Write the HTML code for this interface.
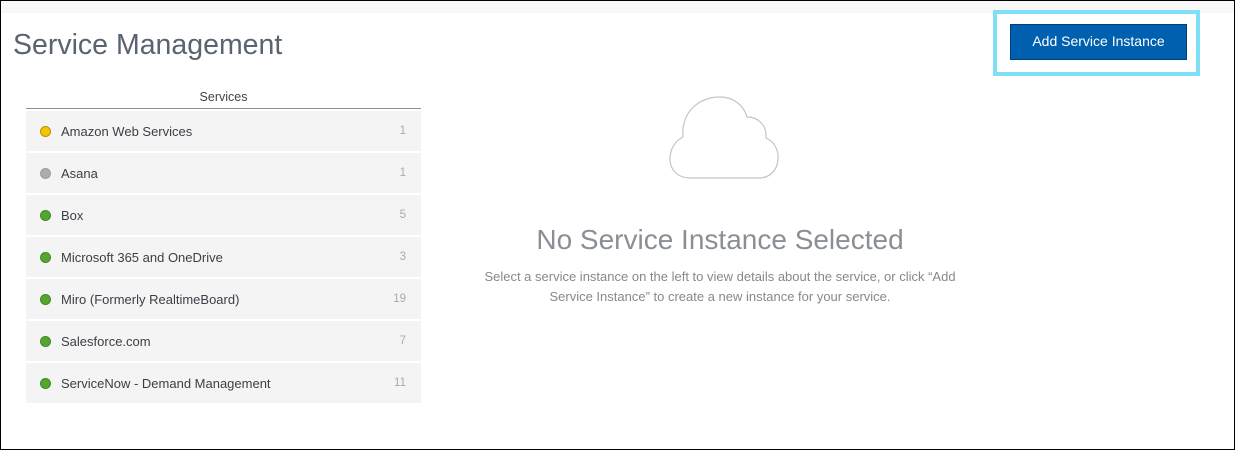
<!DOCTYPE html>
<html><head><meta charset="utf-8"><style>
*{box-sizing:border-box;margin:0;padding:0}
body{width:1235px;height:450px;overflow:hidden;background:#fff;font-family:"Liberation Sans",sans-serif;}
.frame{position:absolute;left:0;top:0;width:1235px;height:450px;border:1px solid #000;}
.strip{position:absolute;left:1px;top:1px;width:1233px;height:12px;background:#f8f8f8;}
h1{position:absolute;left:13px;top:29px;font-weight:300;font-size:28.5px;color:#5a6470;}
.hl{position:absolute;left:993px;top:10px;width:207px;height:66px;border:4px solid #7fdff7;}
.btn{position:absolute;left:1010px;top:24px;width:177px;height:36px;background:#0060b0;border:1px solid #003f7a;color:#fff;font-size:14px;text-align:center;line-height:32px;}
.hdr{position:absolute;left:26px;top:90px;width:395px;height:19px;border-bottom:1px solid #8a9099;text-align:center;font-size:12.5px;color:#444;}
.list{position:absolute;left:26px;top:111px;width:395px;}
.row{height:40px;margin-bottom:2px;background:#f4f4f4;position:relative;font-size:13px;color:#3a3f46;}
.dot{position:absolute;left:14px;top:15px;width:11px;height:11px;border-radius:50%;background:#55a630;border:1px solid #3f8a22;}
.row .t{position:absolute;left:35px;top:13px;}
.row .n{position:absolute;right:15px;top:14px;font-size:11.5px;color:#aaa;}
.empty{position:absolute;left:440px;width:560px;text-align:center;}
.title{top:224px;font-size:28px;font-weight:300;color:#8a8f96;}
.desc{top:267px;font-size:13px;color:#888;line-height:20px;}
</style></head><body>
<div class="frame"></div><div class="strip"></div>
<h1>Service Management</h1>
<div class="hl"></div>
<div class="btn">Add Service Instance</div>
<div class="hdr">Services</div>
<div class="list">
<div class="row"><span class="dot" style="background:#f5c400;border-color:#b89200"></span><span class="t">Amazon Web Services</span><span class="n">1</span></div>
<div class="row"><span class="dot" style="background:#a9adb2;border-color:#9a9ea3"></span><span class="t">Asana</span><span class="n">1</span></div>
<div class="row"><span class="dot"></span><span class="t">Box</span><span class="n">5</span></div>
<div class="row"><span class="dot"></span><span class="t">Microsoft 365 and OneDrive</span><span class="n">3</span></div>
<div class="row"><span class="dot"></span><span class="t">Miro (Formerly RealtimeBoard)</span><span class="n">19</span></div>
<div class="row"><span class="dot"></span><span class="t">Salesforce.com</span><span class="n">7</span></div>
<div class="row"><span class="dot"></span><span class="t">ServiceNow - Demand Management</span><span class="n">11</span></div>
</div>
<svg style="position:absolute;left:0;top:0" width="1235" height="450"><path d="M683 137 C681 111 700 97 720 97 C734 97 744 106 747 117 C758 117 767 125 766 138 C775 142 779 151 778 160 C777 171 769 178 759 178 L690 178 C678 178 670 170 670 159 C670 149 675 141 683 137 Z" fill="none" stroke="#c4c4c4" stroke-width="1.2"/></svg>
<div class="empty title">No Service Instance Selected</div>
<div class="empty desc">Select a service instance on the left to view details about the service, or click “Add<br>Service Instance” to create a new instance for your service.</div>
</body></html>
